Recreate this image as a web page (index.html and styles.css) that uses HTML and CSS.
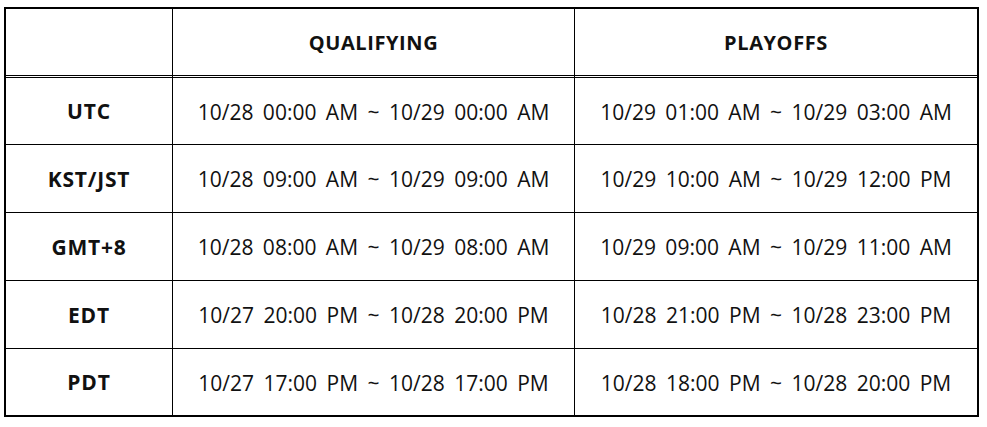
FILE: index.html
```html
<!DOCTYPE html>
<html lang="en">
<head>
<meta charset="utf-8">
<title>Schedule</title>
<link rel="stylesheet" href="styles.css">
</head>
<body>
<div class="schedule">
  <div class="cell head"></div>
  <div class="cell head">QUALIFYING</div>
  <div class="cell head last">PLAYOFFS</div>

  <div class="cell zone">UTC</div>
  <div class="cell time">10/28 00:00 AM ~ 10/29 00:00 AM</div>
  <div class="cell time last">10/29 01:00 AM ~ 10/29 03:00 AM</div>

  <div class="cell zone">KST/JST</div>
  <div class="cell time">10/28 09:00 AM ~ 10/29 09:00 AM</div>
  <div class="cell time last">10/29 10:00 AM ~ 10/29 12:00 PM</div>

  <div class="cell zone">GMT+8</div>
  <div class="cell time">10/28 08:00 AM ~ 10/29 08:00 AM</div>
  <div class="cell time last">10/29 09:00 AM ~ 10/29 11:00 AM</div>

  <div class="cell zone">EDT</div>
  <div class="cell time">10/27 20:00 PM ~ 10/28 20:00 PM</div>
  <div class="cell time last">10/28 21:00 PM ~ 10/28 23:00 PM</div>

  <div class="cell zone bottom">PDT</div>
  <div class="cell time bottom">10/27 17:00 PM ~ 10/28 17:00 PM</div>
  <div class="cell time last bottom">10/28 18:00 PM ~ 10/28 20:00 PM</div>
</div>
</body>
</html>
```

FILE: styles.css
```css
* { box-sizing: border-box; }
html, body { margin: 0; padding: 0; background: #fff; }
body {
  padding: 7px 0 0 4px;
  font-family: "Open Sans", "Noto Sans", sans-serif;
  color: #111;
}
.schedule {
  width: 975px;
  border: 2px solid #000;
  display: grid;
  grid-template-columns: 167px 402px 402px;
  grid-template-rows: 69px 67px 68px 68px 68px 66px;
}
.cell {
  display: flex;
  align-items: center;
  justify-content: center;
  border-right: 1px solid #000;
  border-bottom: 1px solid #000;
  white-space: nowrap;
}
.cell.last { border-right: none; }
.cell.bottom { border-bottom: none; }
.head {
  border-bottom: 3px double #000;
  font-weight: 700;
  font-size: 20px;
  letter-spacing: 0.6px;
}
.zone {
  font-weight: 700;
  font-size: 21px;
  letter-spacing: 0.8px;
}
.time {
  font-size: 21px;
  word-spacing: 4px;
  padding-top: 1px;
}
```
